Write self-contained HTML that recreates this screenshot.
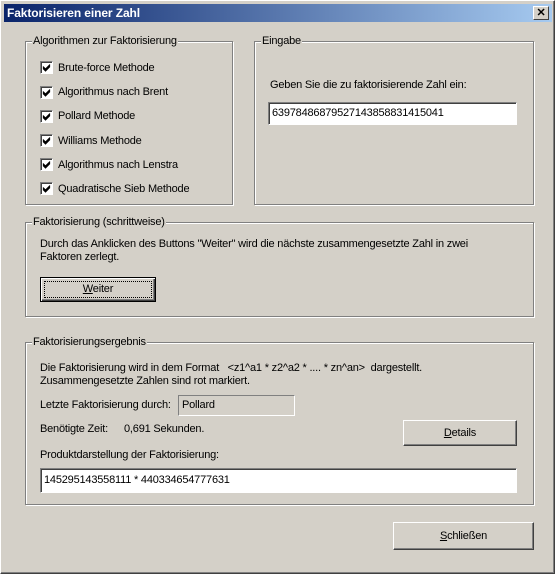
<!DOCTYPE html>
<html><head><meta charset="utf-8"><style>
*{margin:0;padding:0;box-sizing:border-box}
body{width:555px;height:574px;overflow:hidden;background:#d4d0c8;font-family:"Liberation Sans",Arial,sans-serif;font-size:11px;letter-spacing:-0.2px;color:#000}
#win{position:absolute;left:0;top:0;width:555px;height:574px;background:#d4d0c8;border-left:1px solid #fff;border-top:1px solid #fff;border-right:1px solid #404040;border-bottom:1px solid #404040;box-shadow:inset -1px -1px #808080}
.a{position:absolute;white-space:nowrap}
#title{position:absolute;left:3px;top:3px;width:548px;height:18px;background:linear-gradient(to right,#0a246a,#a6caf0);color:#fff;font-weight:bold;font-size:12px;letter-spacing:-0.1px;line-height:18px;padding-left:3px}
#x{position:absolute;right:3px;top:2px;width:16px;height:14px;background:#d4d0c8;border-top:1px solid #fff;border-left:1px solid #fff;border-right:1px solid #404040;border-bottom:1px solid #404040;color:#000;font-size:11px;line-height:12px;text-align:center;font-weight:bold}
.g{position:absolute;border:1px solid #808080;box-shadow:1px 1px 0 #fff, inset 1px 1px 0 #fff}
.gl{position:absolute;top:-7px;left:6px;background:#d4d0c8;padding:0 1px;line-height:13px}
.cb{position:absolute;width:13px;height:13px;background:#fff;border-top:1px solid #808080;border-left:1px solid #808080;border-right:1px solid #fff;border-bottom:1px solid #fff;box-shadow:inset 1px 1px #404040}
.cb svg{position:absolute;left:1px;top:1px}
.in{position:absolute;background:#fff;border-top:1px solid #808080;border-left:1px solid #808080;border-right:1px solid #fff;border-bottom:1px solid #fff;box-shadow:inset 1px 1px #404040;padding:3px 3px;line-height:14px}
.btn{position:absolute;background:#d4d0c8;border-top:1px solid #fff;border-left:1px solid #fff;border-right:1px solid #404040;border-bottom:1px solid #404040;box-shadow:inset -1px -1px #808080;text-align:center}
u{text-decoration:underline}
</style></head><body><div id="win">
<div id="title">Faktorisieren einer Zahl<div id="x">✕</div></div>

<div class="g" style="left:24px;top:40px;width:208px;height:164px"><span class="gl">Algorithmen zur Faktorisierung</span></div>
<div class="g" style="left:253px;top:40px;width:280px;height:164px"><span class="gl">Eingabe</span></div>

<div class="cb" style="left:39px;top:60px"><svg width="9" height="9"><path d="M1 3.5 L3.5 6 L8 1.5 M1 4.5 L3.5 7 L8 2.5 M1 5.5 L3.5 8 L8 3.5" stroke="#000" fill="none"/></svg></div>
<div class="a" style="left:57px;top:61px">Brute-force Methode</div>
<div class="cb" style="left:39px;top:85px"><svg width="9" height="9"><path d="M1 3.5 L3.5 6 L8 1.5 M1 4.5 L3.5 7 L8 2.5 M1 5.5 L3.5 8 L8 3.5" stroke="#000" fill="none"/></svg></div>
<div class="a" style="left:57px;top:85px">Algorithmus nach Brent</div>
<div class="cb" style="left:39px;top:109px"><svg width="9" height="9"><path d="M1 3.5 L3.5 6 L8 1.5 M1 4.5 L3.5 7 L8 2.5 M1 5.5 L3.5 8 L8 3.5" stroke="#000" fill="none"/></svg></div>
<div class="a" style="left:57px;top:109px">Pollard Methode</div>
<div class="cb" style="left:39px;top:133px"><svg width="9" height="9"><path d="M1 3.5 L3.5 6 L8 1.5 M1 4.5 L3.5 7 L8 2.5 M1 5.5 L3.5 8 L8 3.5" stroke="#000" fill="none"/></svg></div>
<div class="a" style="left:57px;top:134px">Williams Methode</div>
<div class="cb" style="left:39px;top:157px"><svg width="9" height="9"><path d="M1 3.5 L3.5 6 L8 1.5 M1 4.5 L3.5 7 L8 2.5 M1 5.5 L3.5 8 L8 3.5" stroke="#000" fill="none"/></svg></div>
<div class="a" style="left:57px;top:158px">Algorithmus nach Lenstra</div>
<div class="cb" style="left:39px;top:181px"><svg width="9" height="9"><path d="M1 3.5 L3.5 6 L8 1.5 M1 4.5 L3.5 7 L8 2.5 M1 5.5 L3.5 8 L8 3.5" stroke="#000" fill="none"/></svg></div>
<div class="a" style="left:57px;top:182px">Quadratische Sieb Methode</div>

<div class="a" style="left:269px;top:78px">Geben Sie die zu faktorisierende Zahl ein:</div>
<div class="in" style="left:267px;top:101px;width:249px;height:23px">63978486879527143858831415041</div>

<div class="g" style="left:24px;top:221px;width:509px;height:95px"><span class="gl">Faktorisierung (schrittweise)</span></div>
<div class="a" style="left:39px;top:237px;line-height:13px">Durch das Anklicken des Buttons "Weiter" wird die nächste zusammengesetzte Zahl in zwei<br>Faktoren zerlegt.</div>
<div class="btn" style="left:39px;top:276px;width:116px;height:25px;border:1px solid #000;box-shadow:inset 1px 1px #fff,inset -1px -1px #404040,inset -2px -2px #808080;line-height:22px"><div style="position:absolute;left:3px;top:3px;right:3px;bottom:3px;border:1px dotted #000"></div><u>W</u>eiter</div>

<div class="g" style="left:24px;top:341px;width:509px;height:163px"><span class="gl">Faktorisierungsergebnis</span></div>
<div class="a" style="left:39px;top:361px;line-height:13px">Die Faktorisierung wird in dem Format &nbsp; &lt;z1^a1 * z2^a2 * .... * zn^an&gt; &nbsp;dargestellt.<br>Zusammengesetzte Zahlen sind rot markiert.</div>
<div class="a" style="left:39px;top:398px">Letzte Faktorisierung durch:</div>
<div style="position:absolute;left:177px;top:394px;width:117px;height:21px;border-top:1px solid #808080;border-left:1px solid #808080;border-right:1px solid #fff;border-bottom:1px solid #fff;padding:3px 3px;line-height:13px">Pollard</div>
<div class="a" style="left:39px;top:422px">Benötigte Zeit:</div>
<div class="a" style="left:123px;top:422px">0,691 Sekunden.</div>
<div class="btn" style="left:402px;top:419px;width:114px;height:26px;line-height:24px"><u>D</u>etails</div>
<div class="a" style="left:39px;top:448px">Produktdarstellung der Faktorisierung:</div>
<div class="in" style="left:39px;top:467px;width:477px;height:25px;padding-top:4px">145295143558111 * 440334654777631</div>

<div class="btn" style="left:392px;top:521px;width:141px;height:28px;line-height:26px"><u>S</u>chließen</div>
</div></body></html>
